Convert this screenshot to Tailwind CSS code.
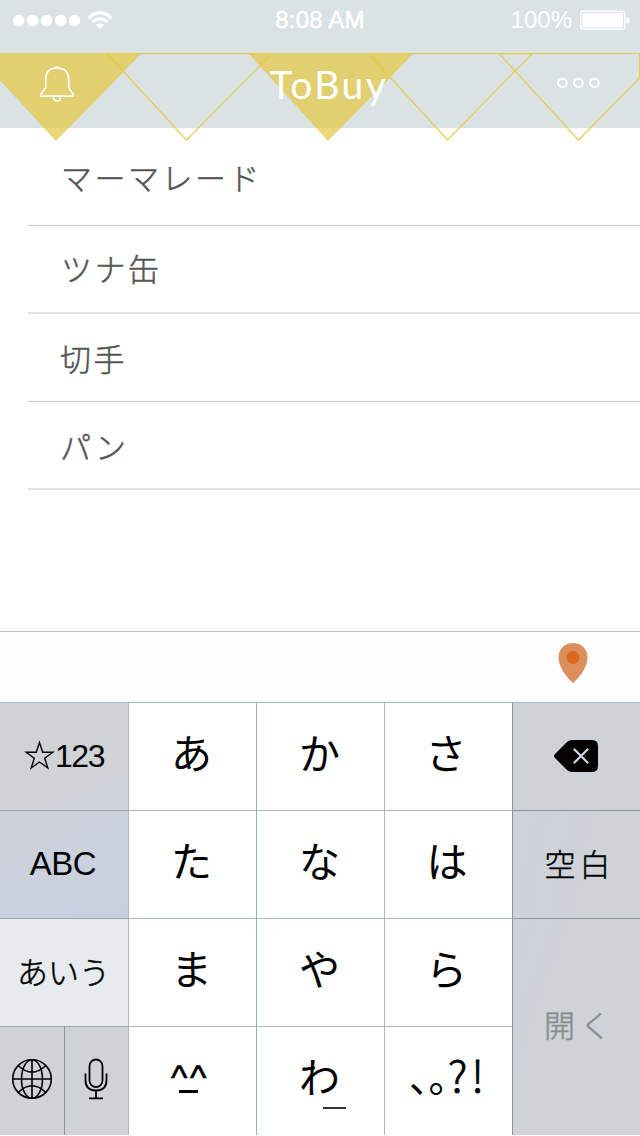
<!DOCTYPE html>
<html lang="ja">
<head>
<meta charset="utf-8">
<title>ToBuy</title>
<script src="https://cdn.jsdelivr.net/npm/@tailwindcss/browser@4"></script>
</head>
<body class="w-[640px] h-[1136px] overflow-hidden bg-white font-['Liberation_Sans','Noto_Sans_CJK_JP',sans-serif]">
<div class="flex flex-col w-[640px] h-[1136px]">
  <header class="relative h-32 shrink-0 bg-[#dbe2e3] text-white">
    <svg class="absolute left-0 top-0" width="640" height="144" viewBox="0 0 640 144">
      <g fill="#e3c744" fill-opacity=".72">
        <path d="M0 53H142L56 141L0 80.500Z"/>
        <path d="M248 53H414L328 141Z"/>
      </g>
      <g fill="none" stroke="#e5c94b" stroke-opacity=".9" stroke-width="1.250">
        <path d="M107 53.500H272L186.500 140Z"/>
        <path d="M368.500 53.500H532.500L447.500 140Z"/>
        <path d="M499 53.500H639.500V78L578.500 140Z"/>
      </g>
    </svg>
    <div class="relative grid grid-cols-3 items-center h-[53px] pb-[13px] px-[13px] text-2xl leading-none">
      <svg width="100" height="20" viewBox="0 0 100 20" fill="#fff">
        <circle cx="5.700" cy="10.500" r="5.700"/><circle cx="19.700" cy="10.500" r="5.700"/><circle cx="33.600" cy="10.500" r="5.700"/><circle cx="47.600" cy="10.500" r="5.700"/><circle cx="61.600" cy="10.500" r="5.700"/>
        <path d="M87 19.200L82.800 15Q87 11.600 91.200 15Z"/>
        <path d="M79.700 11.800Q87 5.800 94.300 11.800M75.900 7.800Q87 -2.200 98.100 7.800" fill="none" stroke="#fff" stroke-width="3"/>
      </svg>
      <span class="text-center whitespace-nowrap tracking-[0.200px] [-webkit-text-stroke:0.5px_white]">8:08 AM</span>
      <span class="flex justify-end items-center gap-2 -mr-[3px]">
        <span>100%</span>
        <svg width="50" height="20" viewBox="0 0 50 20"><rect x=".75" y="1.250" width="44" height="18" rx="2.500" fill="none" stroke="#fff" stroke-width="1.300"/><rect x="2.500" y="3" width="40.500" height="14.500" rx="1.500" fill="#fff"/><path d="M46.500 7Q49.500 7.500 49.500 10.300T46.500 13.700Z" fill="#fff"/></svg>
      </span>
    </div>
    <div class="relative flex items-start justify-between h-[75px] pl-[39px] pr-[39px] pt-3">
      <svg width="36" height="38" viewBox="0 0 36 38" fill="none" stroke="#fff" stroke-width="1.700" stroke-linejoin="round" stroke-linecap="round"><path d="M6.700 22.800V15Q6.700 3 18 3T29.800 15V22.800L34.200 29.500Q34.800 31.200 33.500 31.200H2.700Q1 31.200 1.800 29.500Z"/><path d="M16.700 2.300H19.300M14.500 33Q14.700 35.800 18 35.800T21.500 33"/></svg>
      <h1 class="font-[Lato] text-[39px] leading-[38px] tracking-[2.500px] ml-[27px]">ToBuy</h1>
      <svg class="mt-[12px]" width="45" height="12" viewBox="0 0 45 12" fill="none" stroke="#fff" stroke-width="2"><circle cx="6.500" cy="6" r="4.300"/><circle cx="22.500" cy="6" r="4.300"/><circle cx="38.500" cy="6" r="4.300"/></svg>
    </div>
  </header>
  <main class="h-[503px] shrink-0 pl-7 text-[31px] font-light text-[#555] tracking-[2.500px] font-['Noto_Sans_CJK_JP',sans-serif] [-webkit-text-stroke:0.5px_#555]">
    <ul class="leading-none">
      <li class="flex items-center h-[98px] border-b border-[#c8c8c8] pl-[33px]">マーマレード</li>
      <li class="flex items-center h-[88px] border-b-2 border-[#e2e2e2] pl-[33px] pb-[3px]">ツナ缶</li>
      <li class="flex items-center h-[88px] border-b border-[#c8c8c8] pl-[32px] pb-px">切手</li>
      <li class="flex items-center h-[88px] border-b-2 border-[#e2e2e2] pl-[32px]">パン</li>
    </ul>
  </main>
  <div class="flex h-[71px] shrink-0 border-t border-[#bac2cb] justify-end pr-[52px] pt-[11px] bg-[#fefefe]">
    <svg width="30" height="41" viewBox="0 0 30 41"><path d="M15 0C7 0 .5 6 .5 14C.5 24 8 34 15 40C22 34 29.500 24 29.500 14C29.500 6 23 0 15 0Z" fill="#dc8e5c"/><circle cx="15" cy="14.500" r="6.500" fill="#db681c"/></svg>
  </div>
  <div class="grid grid-cols-[128px_128px_128px_128px_128px] grid-rows-[108px_108px_108px_109px] h-[433px] text-[41px] leading-none text-black *:flex *:items-center *:justify-center *:border-t *:border-[#aab6c6]">
    <div class="bg-[linear-gradient(155deg,#d0d3d6_55%,#ced3dc)] pb-[2px]"><svg class="mr-px" width="31" height="31" viewBox="0 0 31 31" fill="none" stroke="#000" stroke-width="1.400"><path d="M15.500 2.500L18.700 12.200H28.900L20.700 18.200L23.800 28L15.500 22L7.200 28L10.300 18.200L2.100 12.200H12.300Z"/></svg><span class="text-[32px] tracking-[-1.500px] -ml-px">123</span></div>
    <div class="border-l bg-white pb-[3px] pr-[2px]">あ</div>
    <div class="border-l !border-l-[#95b3b3] bg-white pb-[3px] pr-[2px]">か</div>
    <div class="border-l bg-white pb-[3px] pr-[5px]">さ</div>
    <div class="border-l !border-l-[#8d949f] bg-[#cfd2d7] pb-[2px]">
      <svg width="45" height="32" viewBox="0 0 45 32"><path d="M1 14L13 2Q15 0 18 0H38Q44 0 44 6V26Q44 32 38 32H18Q15 32 13 30L1 18Q-1 16 1 14Z" fill="#050203"/><path d="M20.500 9.500L33.500 22.500M33.500 9.500L20.500 22.500" stroke="#d3d8df" stroke-width="2.200" stroke-linecap="round"/></svg>
    </div>

    <div class="!border-[#9ca3af] bg-[linear-gradient(150deg,#ced2da,#cad1df_65%,#c9cedd)] text-[33px] tracking-[-0.500px] pb-[2px] pr-[2px]">ABC</div>
    <div class="border-l bg-white pb-[3px] pr-[2px]">た</div>
    <div class="border-l !border-l-[#8bb0be] bg-white pb-[3px] pr-[2px]">な</div>
    <div class="border-l bg-white pb-[3px] pr-[3px]">は</div>
    <div class="border-l !border-[#8d949f] bg-[linear-gradient(100deg,#cdd2dc,#cfd2d7_60%)] text-[31px] font-light font-['Noto_Sans_CJK_JP'] tracking-[2px] pb-[5px] pl-[4px] [-webkit-text-stroke:0.4px_black]"><span>空</span><span class="ml-[2px]">白</span></div>

    <div class="!border-[#9ca3af] bg-[#e7ebee] text-[31px] font-['Noto_Sans_CJK_JP'] font-light pb-[5px] pr-px [-webkit-text-stroke:0.5px_black]">あいう</div>
    <div class="border-l bg-white pb-[3px] pr-[2px]">ま</div>
    <div class="border-l !border-l-[#8bb0be] bg-white pb-[3px] pr-[2px]">や</div>
    <div class="border-l bg-white pb-[3px] pr-1">ら</div>
    <div class="row-span-2 border-l !border-[#8d949f] bg-[linear-gradient(110deg,#cdd2dc,#cfd2d7_30%)] text-[31px] font-light text-[#888b90] font-['Noto_Sans_CJK_JP'] tracking-[5px] pb-[8px] pl-[7px] [-webkit-text-stroke:0.5px_#888b90]">開く</div>

    <div class="!border-[#9ca3af] bg-[#cfd3d7]">
      <div class="flex items-center justify-center w-16 h-full pb-1">
        <svg width="42" height="42" viewBox="0 0 42 42" fill="none" stroke="#000" stroke-width="1.600"><circle cx="21" cy="21" r="19.300"/><ellipse cx="21" cy="21" rx="10.500" ry="19.300"/><path d="M1.700 21H40.300M21 1.700V40.300M7.200 7.500Q21 21 34.800 7.500M7.200 34.500Q21 21 34.800 34.500"/></svg>
      </div>
      <div class="flex items-center justify-center w-16 h-full border-l border-[#8d949f] pb-1 pr-[2px]">
        <svg width="24" height="42" viewBox="0 0 24 42" fill="none" stroke="#000" stroke-width="1.800"><rect x="5.500" y="1.500" width="13" height="27.500" rx="6.500"/><path d="M1.500 15.500V22Q1.500 32.500 12 32.500T22.500 22V15.500M12 32.500V40M5 40.300H19"/></svg>
      </div>
    </div>
    <div class="border-l bg-white relative"><span class="text-[35px] tracking-[2.500px] -ml-[5px] pb-[7px] [-webkit-text-stroke:0.6px_black]">^^</span><span class="absolute left-[50px] top-[63px] w-[19px] h-[3px] bg-black"></span></div>
    <div class="border-l !border-l-[#8fb5a5] bg-white relative pb-1 pr-[2px]">わ<span class="absolute left-[66px] top-[80px] w-[23px] h-[2px] bg-[#333]"></span></div>
    <div class="border-l bg-white font-['Noto_Sans_CJK_JP'] pb-[14px]"><span class="text-[39px] [font-feature-settings:'halt'] pt-[2px]">、。</span><span class="text-[43px] font-light tracking-[4px] pb-px [-webkit-text-stroke:0.8px_black]">?!</span></div>
  </div>
</div>
</body>
</html>
